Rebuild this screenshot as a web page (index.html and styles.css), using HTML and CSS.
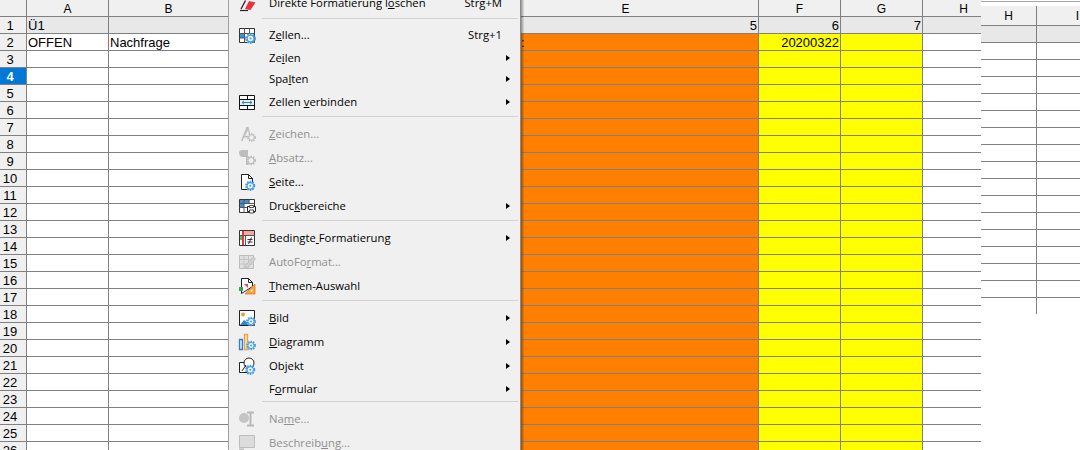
FILE: index.html
```html
<!DOCTYPE html>
<html lang="de">
<head>
<meta charset="utf-8">
<title>Tabelle</title>
<link rel="stylesheet" href="styles.css">
</head>
<body>
<svg class="defs" width="0" height="0" aria-hidden="true">
  <symbol id="gear" viewBox="0 0 10 10">
    <circle cx="5" cy="5" r="4" fill="#f0f0f0" stroke="#3d9be3" stroke-width="1.8" stroke-dasharray="1.5 1.05"/>
    <circle cx="5" cy="5" r="3" fill="#f4f8fc" stroke="#3d9be3" stroke-width="1"/>
    <circle cx="5" cy="5" r="1" fill="#3d9be3"/>
  </symbol>
  <symbol id="gear-off" viewBox="0 0 10 10">
    <circle cx="5" cy="5" r="4" fill="#f0f0f0" stroke="#b8b8b8" stroke-width="1.8" stroke-dasharray="1.5 1.05"/>
    <circle cx="5" cy="5" r="3" fill="#f0f0f0" stroke="#b8b8b8" stroke-width="1"/>
  </symbol>
</svg>
<main class="app">
  <section class="pane-left">
    <div class="row"><b class="rh"></b><b class="ch">A</b><b class="ch">B</b><b class="ch">C</b><b class="ch">D</b><b class="ch">E</b><b class="ch">F</b><b class="ch">G</b><b class="ch">H</b></div>
    <div class="row"><b class="rh">1</b><b class="c g">Ü1</b><b class="c g"></b><b class="c g"></b><b class="c g"></b><b class="c g r">5</b><b class="c g r">6</b><b class="c g r">7</b><b class="c g"></b></div>
    <div class="row"><b class="rh">2</b><b class="c">OFFEN</b><b class="c">Nachfrage</b><b class="c"></b><b class="c o"></b><b class="c o tail">:</b><b class="c y r">20200322</b><b class="c y"></b><b class="c"></b></div>
    <div class="row"><b class="rh">3</b><b class="c"></b><b class="c"></b><b class="c"></b><b class="c o"></b><b class="c o"></b><b class="c y"></b><b class="c y"></b><b class="c"></b></div>
    <div class="row"><b class="rh sel">4</b><b class="c"></b><b class="c"></b><b class="c"></b><b class="c o"></b><b class="c o"></b><b class="c y"></b><b class="c y"></b><b class="c"></b></div>
    <div class="row"><b class="rh">5</b><b class="c"></b><b class="c"></b><b class="c"></b><b class="c o"></b><b class="c o"></b><b class="c y"></b><b class="c y"></b><b class="c"></b></div>
    <div class="row"><b class="rh">6</b><b class="c"></b><b class="c"></b><b class="c"></b><b class="c o"></b><b class="c o"></b><b class="c y"></b><b class="c y"></b><b class="c"></b></div>
    <div class="row"><b class="rh">7</b><b class="c"></b><b class="c"></b><b class="c"></b><b class="c o"></b><b class="c o"></b><b class="c y"></b><b class="c y"></b><b class="c"></b></div>
    <div class="row"><b class="rh">8</b><b class="c"></b><b class="c"></b><b class="c"></b><b class="c o"></b><b class="c o"></b><b class="c y"></b><b class="c y"></b><b class="c"></b></div>
    <div class="row"><b class="rh">9</b><b class="c"></b><b class="c"></b><b class="c"></b><b class="c o"></b><b class="c o"></b><b class="c y"></b><b class="c y"></b><b class="c"></b></div>
    <div class="row"><b class="rh">10</b><b class="c"></b><b class="c"></b><b class="c"></b><b class="c o"></b><b class="c o"></b><b class="c y"></b><b class="c y"></b><b class="c"></b></div>
    <div class="row"><b class="rh">11</b><b class="c"></b><b class="c"></b><b class="c"></b><b class="c o"></b><b class="c o"></b><b class="c y"></b><b class="c y"></b><b class="c"></b></div>
    <div class="row"><b class="rh">12</b><b class="c"></b><b class="c"></b><b class="c"></b><b class="c o"></b><b class="c o"></b><b class="c y"></b><b class="c y"></b><b class="c"></b></div>
    <div class="row"><b class="rh">13</b><b class="c"></b><b class="c"></b><b class="c"></b><b class="c o"></b><b class="c o"></b><b class="c y"></b><b class="c y"></b><b class="c"></b></div>
    <div class="row"><b class="rh">14</b><b class="c"></b><b class="c"></b><b class="c"></b><b class="c o"></b><b class="c o"></b><b class="c y"></b><b class="c y"></b><b class="c"></b></div>
    <div class="row"><b class="rh">15</b><b class="c"></b><b class="c"></b><b class="c"></b><b class="c o"></b><b class="c o"></b><b class="c y"></b><b class="c y"></b><b class="c"></b></div>
    <div class="row"><b class="rh">16</b><b class="c"></b><b class="c"></b><b class="c"></b><b class="c o"></b><b class="c o"></b><b class="c y"></b><b class="c y"></b><b class="c"></b></div>
    <div class="row"><b class="rh">17</b><b class="c"></b><b class="c"></b><b class="c"></b><b class="c o"></b><b class="c o"></b><b class="c y"></b><b class="c y"></b><b class="c"></b></div>
    <div class="row"><b class="rh">18</b><b class="c"></b><b class="c"></b><b class="c"></b><b class="c o"></b><b class="c o"></b><b class="c y"></b><b class="c y"></b><b class="c"></b></div>
    <div class="row"><b class="rh">19</b><b class="c"></b><b class="c"></b><b class="c"></b><b class="c o"></b><b class="c o"></b><b class="c y"></b><b class="c y"></b><b class="c"></b></div>
    <div class="row"><b class="rh">20</b><b class="c"></b><b class="c"></b><b class="c"></b><b class="c o"></b><b class="c o"></b><b class="c y"></b><b class="c y"></b><b class="c"></b></div>
    <div class="row"><b class="rh">21</b><b class="c"></b><b class="c"></b><b class="c"></b><b class="c o"></b><b class="c o"></b><b class="c y"></b><b class="c y"></b><b class="c"></b></div>
    <div class="row"><b class="rh">22</b><b class="c"></b><b class="c"></b><b class="c"></b><b class="c o"></b><b class="c o"></b><b class="c y"></b><b class="c y"></b><b class="c"></b></div>
    <div class="row"><b class="rh">23</b><b class="c"></b><b class="c"></b><b class="c"></b><b class="c o"></b><b class="c o"></b><b class="c y"></b><b class="c y"></b><b class="c"></b></div>
    <div class="row"><b class="rh">24</b><b class="c"></b><b class="c"></b><b class="c"></b><b class="c o"></b><b class="c o"></b><b class="c y"></b><b class="c y"></b><b class="c"></b></div>
    <div class="row"><b class="rh">25</b><b class="c"></b><b class="c"></b><b class="c"></b><b class="c o"></b><b class="c o"></b><b class="c y"></b><b class="c y"></b><b class="c"></b></div>
    <div class="row"><b class="rh">26</b><b class="c"></b><b class="c"></b><b class="c"></b><b class="c o"></b><b class="c o"></b><b class="c y"></b><b class="c y"></b><b class="c"></b></div>
  </section>

  <section class="pane-right">
    <div class="rrow head"><b class="ch">H</b><b class="ch">I</b></div>
    <div class="rrow"><b class="c g"></b><b class="c g"></b></div>
    <div class="rrow"><b class="c"></b><b class="c"></b></div>
    <div class="rrow"><b class="c"></b><b class="c"></b></div>
    <div class="rrow"><b class="c"></b><b class="c"></b></div>
    <div class="rrow"><b class="c"></b><b class="c"></b></div>
    <div class="rrow"><b class="c"></b><b class="c"></b></div>
    <div class="rrow"><b class="c"></b><b class="c"></b></div>
    <div class="rrow"><b class="c"></b><b class="c"></b></div>
    <div class="rrow"><b class="c"></b><b class="c"></b></div>
    <div class="rrow"><b class="c"></b><b class="c"></b></div>
    <div class="rrow"><b class="c"></b><b class="c"></b></div>
    <div class="rrow"><b class="c"></b><b class="c"></b></div>
    <div class="rrow"><b class="c"></b><b class="c"></b></div>
    <div class="rrow"><b class="c"></b><b class="c"></b></div>
    <div class="rrow"><b class="c"></b><b class="c"></b></div>
    <div class="rrow"><b class="c"></b><b class="c"></b></div>
    <div class="rrow stub"><b class="c"></b></div>
  </section>

  <nav class="menu">
    <div class="mi"><svg class="ic" viewBox="0 0 18 18"><path d="M2 16.500h8" stroke="#222" stroke-width="1.200"/><path d="M7.500 6.500L3 15" stroke="#222" stroke-width="1.300"/><path d="M7 15l4-8 6.500 1.500-5 7.500z" fill="#e8323c"/></svg><span class="lb">Direkte Formatierung l<u>ö</u>schen</span><span class="sc">Strg+M</span></div>
    <div class="sep"></div>
    <div class="mi"><svg class="ic" viewBox="0 0 18 18"><path d="M1.500 2.500h15v14h-15z" fill="#fff" stroke="#333"/><path d="M2 7h5v5H2z" fill="#3f8fd6"/><path d="M1.500 7.500h15M1.500 12h15M6.500 2.500v14M11.500 2.500v14" stroke="#555" fill="none"/><use href="#gear" x="7" y="7" width="11" height="11"/></svg><span class="lb">Z<u>e</u>llen...</span><span class="sc">Strg+1</span></div>
    <div class="mi plain"><span class="lb">Ze<u>i</u>len</span><i class="ar"></i></div>
    <div class="mi plain"><span class="lb">Spa<u>l</u>ten</span><i class="ar"></i></div>
    <div class="mi"><svg class="ic" viewBox="0 0 18 18"><path d="M1.500 2.500h15v14h-15z" fill="#fff" stroke="#111"/><path d="M1.500 6.500h15M1.500 12.500h15M9.500 2.500v4M9.500 12.500v4" stroke="#111"/><path d="M2 7h14v5H2z" fill="#e6f2fb"/><path d="M4 9.500h10M6 7.800L4 9.500l2 1.700M12 7.800l2 1.700-2 1.700" fill="none" stroke="#2a86d4"/></svg><span class="lb">Zellen <u>v</u>erbinden</span><i class="ar"></i></div>
    <div class="sep"></div>
    <div class="mi off"><svg class="ic" viewBox="0 0 18 18"><path d="M3 16L8.500 2h2L13 12h-1.500l-1.500-7-3 6h3v1.500H6L4.500 16z" fill="#bdbdbd"/><use href="#gear-off" x="9" y="8" width="9" height="9"/></svg><span class="lb"><u>Z</u>eichen...</span></div>
    <div class="mi off"><svg class="ic" viewBox="0 0 18 18"><path d="M1 3.500C1 2 2 1 4 1h6v15H8V8H5C2.500 8 1 6 1 3.500z" fill="#bdbdbd"/><use href="#gear-off" x="8" y="6.500" width="10" height="10"/></svg><span class="lb"><u>A</u>bsatz...</span></div>
    <div class="mi"><svg class="ic" viewBox="0 0 18 18"><path d="M3.500 1.500h7l4 4v11h-11z" fill="#fff" stroke="#222"/><path d="M10.500 1.500v4h4" fill="none" stroke="#222"/><use href="#gear" x="7" y="7.500" width="10.500" height="10.500"/></svg><span class="lb"><u>S</u>eite...</span></div>
    <div class="mi"><svg class="ic" viewBox="0 0 18 18"><path d="M1.500 2.500h15v13h-15z" fill="#fff" stroke="#333"/><path d="M2 3h9.500v3.500H2zM2 7h4v3H2z" fill="#3f8fd6"/><path d="M1.500 6.500h15M1.500 10.500h8M6 2.500v13M11 2.500v4" stroke="#555" fill="none"/><path d="M9.500 9.500h8v5h-8z" fill="#f0f0f0" stroke="#222"/><path d="M11.500 8.500h4v2h-4zM11.500 13h4v3h-4z" fill="#fff" stroke="#222" stroke-width=".8"/></svg><span class="lb">Druc<u>k</u>bereiche</span><i class="ar"></i></div>
    <div class="sep"></div>
    <div class="mi"><svg class="ic" viewBox="0 0 18 18"><path d="M1.500 1.500h15v15h-15z" fill="#fff" stroke="#333"/><path d="M5 2h11v4.500H5z" fill="#f9a3a3"/><path d="M4 2h2v14H4z" fill="#e03a3a"/><path d="M2 7h2v4H2z" fill="#5dbb63"/><path d="M1.500 6.500h15M7.500 6.500v10" stroke="#555" fill="none"/><path d="M9.500 10.500h5M9.500 13h5M13.500 8.500l-3 6.500" stroke="#333" fill="none"/></svg><span class="lb">Bedingte<u>&nbsp;</u>Formatierung</span><i class="ar"></i></div>
    <div class="mi off"><svg class="ic" viewBox="0 0 18 18"><path d="M1.500 2.500h14v13h-14z" fill="#e0e0e0" stroke="#bdbdbd"/><path d="M1.500 6.500h14M1.500 11h14M6 2.500v13M10.500 2.500v13" stroke="#c4c4c4"/><path d="M7 15l1-3 7.500-8 2 2-7.500 8z" fill="#d4d4d4" stroke="#bdbdbd"/></svg><span class="lb">AutoFo<u>r</u>mat...</span></div>
    <div class="mi"><svg class="ic" viewBox="0 0 18 18"><path d="M3.500 1.500h7l4 4v4l-11 7z" fill="#fff" stroke="#222"/><path d="M10.500 1.500v4h4" fill="none" stroke="#222"/><path d="M6 7h4v4z" fill="#e94b3c"/><path d="M1 10h4v4H1z" fill="#2fa84f"/><path d="M17 7v10H7z" fill="#f9a03f" stroke="#d97f20" stroke-width=".8"/><path d="M14.500 12v2.500H12z" fill="#fff"/></svg><span class="lb"><u>T</u>hemen-Auswahl</span></div>
    <div class="sep"></div>
    <div class="mi"><svg class="ic" viewBox="0 0 18 18"><path d="M1.500 1.500h15v15h-15z" fill="#fff" stroke="#222"/><circle cx="5" cy="5.500" r="2" fill="#f39a3c"/><path d="M2 16l4-5 3 2 3-3v6z" fill="#2a86d4"/><use href="#gear" x="8" y="7.500" width="10" height="10"/></svg><span class="lb"><u>B</u>ild</span><i class="ar"></i></div>
    <div class="mi"><svg class="ic" viewBox="0 0 18 18"><path d="M1.500 6.500h3v10h-3z" fill="#cfe5f7" stroke="#2a7fd0" stroke-width="1.300"/><path d="M6.500 1.500h3v15h-3z" fill="#fbe3c6" stroke="#f2a23f" stroke-width="1.300"/><use href="#gear" x="8" y="7.500" width="10" height="10"/></svg><span class="lb"><u>D</u>iagramm</span><i class="ar"></i></div>
    <div class="mi"><svg class="ic" viewBox="0 0 18 18"><path d="M1.500 5.500h11v10h-11z" fill="#fff" stroke="#222"/><circle cx="11" cy="6" r="5" fill="#fff" stroke="#222"/><path d="M4 14l4-6" stroke="#222"/><use href="#gear" x="7" y="7.500" width="10.500" height="10.500"/></svg><span class="lb">Ob<u>j</u>ekt</span><i class="ar"></i></div>
    <div class="mi plain short"><span class="lb">F<u>o</u>rmular</span><i class="ar"></i></div>
    <div class="sep"></div>
    <div class="mi off"><svg class="ic" viewBox="0 0 18 18"><circle cx="6" cy="8" r="5" fill="#c4c4c4"/><path d="M9 2.500h7M9 15.500h7M12.500 2.500v13" fill="none" stroke="#b8b8b8" stroke-width="2"/></svg><span class="lb">Na<u>m</u>e...</span></div>
    <div class="mi off"><svg class="ic" viewBox="0 0 18 18"><path d="M1.500 1.500h15v12h-15z" fill="#dcdcdc" stroke="#bdbdbd"/><path d="M1 15.500h5" stroke="#bdbdbd" stroke-width="2"/></svg><span class="lb">Beschreib<u>u</u>ng...</span></div>
  </nav>
</main>
</body>
</html>
```
FILE: styles.css
```css
* { box-sizing: border-box; }
html, body { margin: 0; height: 100%; overflow: hidden; background: #fff; }
.defs { position: absolute; }
b, i { font-weight: normal; font-style: normal; }

.app {
  position: relative;
  display: flex;
  width: 1080px;
  height: 450px;
  overflow: hidden;
  font: 13px/18px "Liberation Sans", Arial, sans-serif;
  color: #000;
}

.pane-left { flex: 0 0 981px; overflow: hidden; }
.row {
  display: grid;
  grid-template-columns: 27px 82px 120px 132px 132px 266px 82px 82px 82px;
  height: 17px;
}
.c, .ch, .rh {
  display: block;
  overflow: hidden;
  white-space: nowrap;
  border-right: 1px solid #808080;
  border-bottom: 1px solid #808080;
}
.c { padding: 0 1px; }
.ch, .rh { background: #f0f0f0; text-align: center; font-size: 12px; }
.rh { font-size: 13px; padding-right: 6px; }
.r { text-align: right; }
.g { background: #e8e8e8; }
.o { background: #ff8000; }
.y { background: #ffff00; }
.sel { background: #0078d7; color: #fff; font-weight: bold; }
.tail { padding-left: 28px; }

.pane-right {
  flex: 1;
  overflow: hidden;
  border-top: 1px solid #a8a8a8;
  margin-top: 1px;
}
.rrow {
  display: grid;
  grid-template-columns: 56px 82px;
  height: 17px;
}
.rrow.head { height: 24px; padding-top: 4px; }
.rrow.head .ch { line-height: 21px; }
.rrow.stub { height: 16px; }
.rrow.stub .c { border-bottom: 0; }

.menu {
  position: absolute;
  left: 228px;
  top: -9px;
  width: 293px;
  height: 470px;
  background: #f0f0f0;
  border-left: 1px solid #a0a0a0;
  border-right: 1px solid #8a8a8a;
  font: 11.3px/16px "Open Sans", "Noto Sans", sans-serif;
  color: #000;
}
.menu::after {
  content: "";
  position: absolute;
  left: 292px;
  top: 0;
  bottom: 0;
  width: 3px;
  background: linear-gradient(to right, rgba(0,0,0,.38), rgba(0,0,0,.06));
}
.mi {
  display: flex;
  align-items: center;
  height: 24px;
  padding-left: 9px;
}
.mi.plain { height: 21.5px; padding-left: 40px; }
.mi.plain.short { height: 21px; }
.ic { flex: 0 0 18px; width: 18px; height: 18px; margin-right: 13px; }
.lb { flex: 1; white-space: nowrap; }
.sc { margin-right: 18px; }
.ar {
  width: 0;
  height: 0;
  margin-right: 10px;
  border-left: 4px solid #000;
  border-top: 3.5px solid transparent;
  border-bottom: 3.5px solid transparent;
}
.off { color: #8f8f8f; }
.sep { height: 8px; padding: 2px 2px 0 33px; }
.mi:first-child + .sep { padding-top: 3px; }
.sep::before { content: ""; display: block; height: 1px; background: #d2d2d2; }
```
